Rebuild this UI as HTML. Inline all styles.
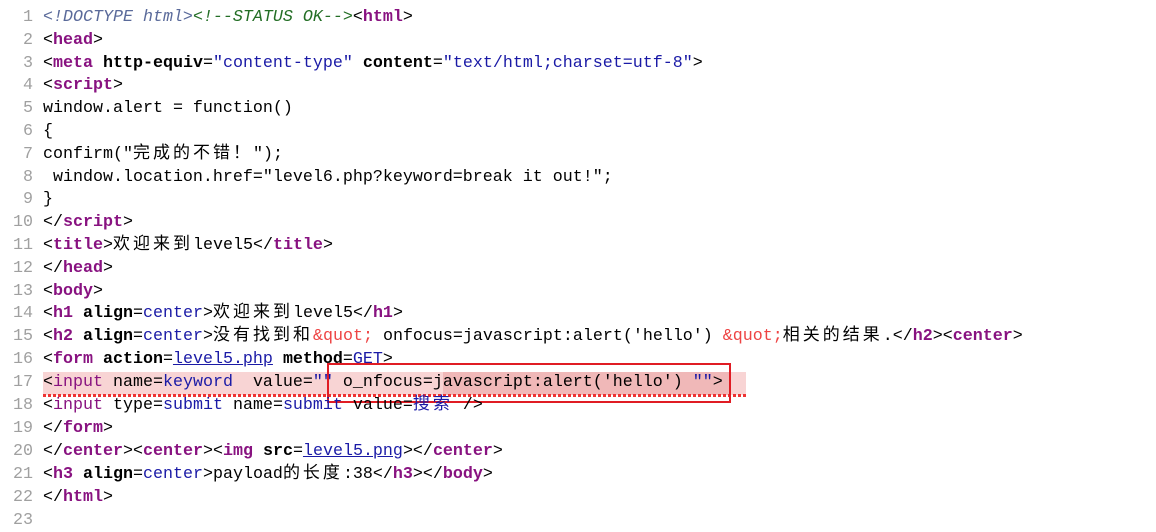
<!DOCTYPE html>
<html><head><meta charset="utf-8"><style>
body{margin:0;width:1156px;height:526px;background:#fff;overflow:hidden;position:relative;font-family:"Liberation Mono",monospace;font-size:16.67px;color:#000}
.l{position:absolute;left:43px;height:23px;line-height:23px;white-space:pre}
.n{position:absolute;left:0;width:33px;text-align:right;height:23px;line-height:23px;color:#a0a0a0}
.t{color:#881280;font-weight:bold}
.a{font-weight:bold}
.v{color:#1a1aa6}
.u{color:#1a1aa6;text-decoration:underline;text-decoration-color:#1a1aa6}
.e{color:#e44}
.d{color:#5a6a9a;font-style:italic}
.g{color:#236e25;font-style:italic}
.c{font-family:"Noto Sans CJK SC",sans-serif;font-size:17px;letter-spacing:3px;line-height:0}
</style></head><body>
<div style="position:absolute;left:43px;top:372px;width:703px;height:23px;background:#f8d4d4"></div>
<div style="position:absolute;left:443px;top:372px;width:288px;height:23px;background:#f0b8b8"></div>
<div style="position:absolute;left:43px;top:394px;width:703px;height:3px;background:repeating-linear-gradient(90deg,#e33 0 3px,transparent 3px 5px)"></div>
<div style="position:absolute;left:327px;top:363px;width:400px;height:36px;border:2.5px solid #e01c24"></div>

<div class="n" style="top:6px">1</div><div class="l" style="top:6px"><span class="d">&lt;!DOCTYPE html&gt;</span><span class="g">&lt;!--STATUS OK--&gt;</span>&lt;<span class="t">html</span>&gt;</div>
<div class="n" style="top:29px">2</div><div class="l" style="top:29px">&lt;<span class="t">head</span>&gt;</div>
<div class="n" style="top:52px">3</div><div class="l" style="top:52px">&lt;<span class="t">meta</span> <span class="a">http-equiv</span>=<span class="v">"content-type"</span> <span class="a">content</span>=<span class="v">"text/html;charset=utf-8"</span>&gt;</div>
<div class="n" style="top:74px">4</div><div class="l" style="top:74px">&lt;<span class="t">script</span>&gt;</div>
<div class="n" style="top:97px">5</div><div class="l" style="top:97px">window.alert = function()</div>
<div class="n" style="top:120px">6</div><div class="l" style="top:120px">{</div>
<div class="n" style="top:143px">7</div><div class="l" style="top:143px">confirm("<span class="c">完成的不错！</span>");</div>
<div class="n" style="top:166px">8</div><div class="l" style="top:166px"> window.location.href="level6.php?keyword=break it out!";</div>
<div class="n" style="top:188px">9</div><div class="l" style="top:188px">}</div>
<div class="n" style="top:211px">10</div><div class="l" style="top:211px">&lt;/<span class="t">script</span>&gt;</div>
<div class="n" style="top:234px">11</div><div class="l" style="top:234px">&lt;<span class="t">title</span>&gt;<span class="c">欢迎来到</span>level5&lt;/<span class="t">title</span>&gt;</div>
<div class="n" style="top:257px">12</div><div class="l" style="top:257px">&lt;/<span class="t">head</span>&gt;</div>
<div class="n" style="top:280px">13</div><div class="l" style="top:280px">&lt;<span class="t">body</span>&gt;</div>
<div class="n" style="top:302px">14</div><div class="l" style="top:302px">&lt;<span class="t">h1</span> <span class="a">align</span>=<span class="v">center</span>&gt;<span class="c">欢迎来到</span>level5&lt;/<span class="t">h1</span>&gt;</div>
<div class="n" style="top:325px">15</div><div class="l" style="top:325px">&lt;<span class="t">h2</span> <span class="a">align</span>=<span class="v">center</span>&gt;<span class="c">没有找到和</span><span class="e">&amp;quot;</span> onfocus=javascript:alert('hello') <span class="e">&amp;quot;</span><span class="c">相关的结果</span>.&lt;/<span class="t">h2</span>&gt;&lt;<span class="t">center</span>&gt;</div>
<div class="n" style="top:348px">16</div><div class="l" style="top:348px">&lt;<span class="t">form</span> <span class="a">action</span>=<span class="u">level5.php</span> <span class="a">method</span>=<span class="v">GET</span>&gt;</div>
<div class="n" style="top:371px">17</div><div class="l" style="top:371px">&lt;<span class="t" style="font-weight:normal">input</span> <span class="a" style="font-weight:normal">name</span>=<span class="v">keyword</span>  <span class="a" style="font-weight:normal">value</span>=<span class="v">""</span> o_nfocus=javascript:alert('hello') <span class="v">""</span>&gt;</div>
<div class="n" style="top:394px">18</div><div class="l" style="top:394px">&lt;<span class="t" style="font-weight:normal">input</span> <span class="a" style="font-weight:normal">type</span>=<span class="v">submit</span> <span class="a" style="font-weight:normal">name</span>=<span class="v">submit</span> <span class="a" style="font-weight:normal">value</span>=<span class="v c">搜索</span> /&gt;</div>
<div class="n" style="top:417px">19</div><div class="l" style="top:417px">&lt;/<span class="t">form</span>&gt;</div>
<div class="n" style="top:440px">20</div><div class="l" style="top:440px">&lt;/<span class="t">center</span>&gt;&lt;<span class="t">center</span>&gt;&lt;<span class="t">img</span> <span class="a">src</span>=<span class="u">level5.png</span>&gt;&lt;/<span class="t">center</span>&gt;</div>
<div class="n" style="top:463px">21</div><div class="l" style="top:463px">&lt;<span class="t">h3</span> <span class="a">align</span>=<span class="v">center</span>&gt;payload<span class="c">的长度</span>:38&lt;/<span class="t">h3</span>&gt;&lt;/<span class="t">body</span>&gt;</div>
<div class="n" style="top:486px">22</div><div class="l" style="top:486px">&lt;/<span class="t">html</span>&gt;</div>
<div class="n" style="top:509px">23</div>
</body></html>
